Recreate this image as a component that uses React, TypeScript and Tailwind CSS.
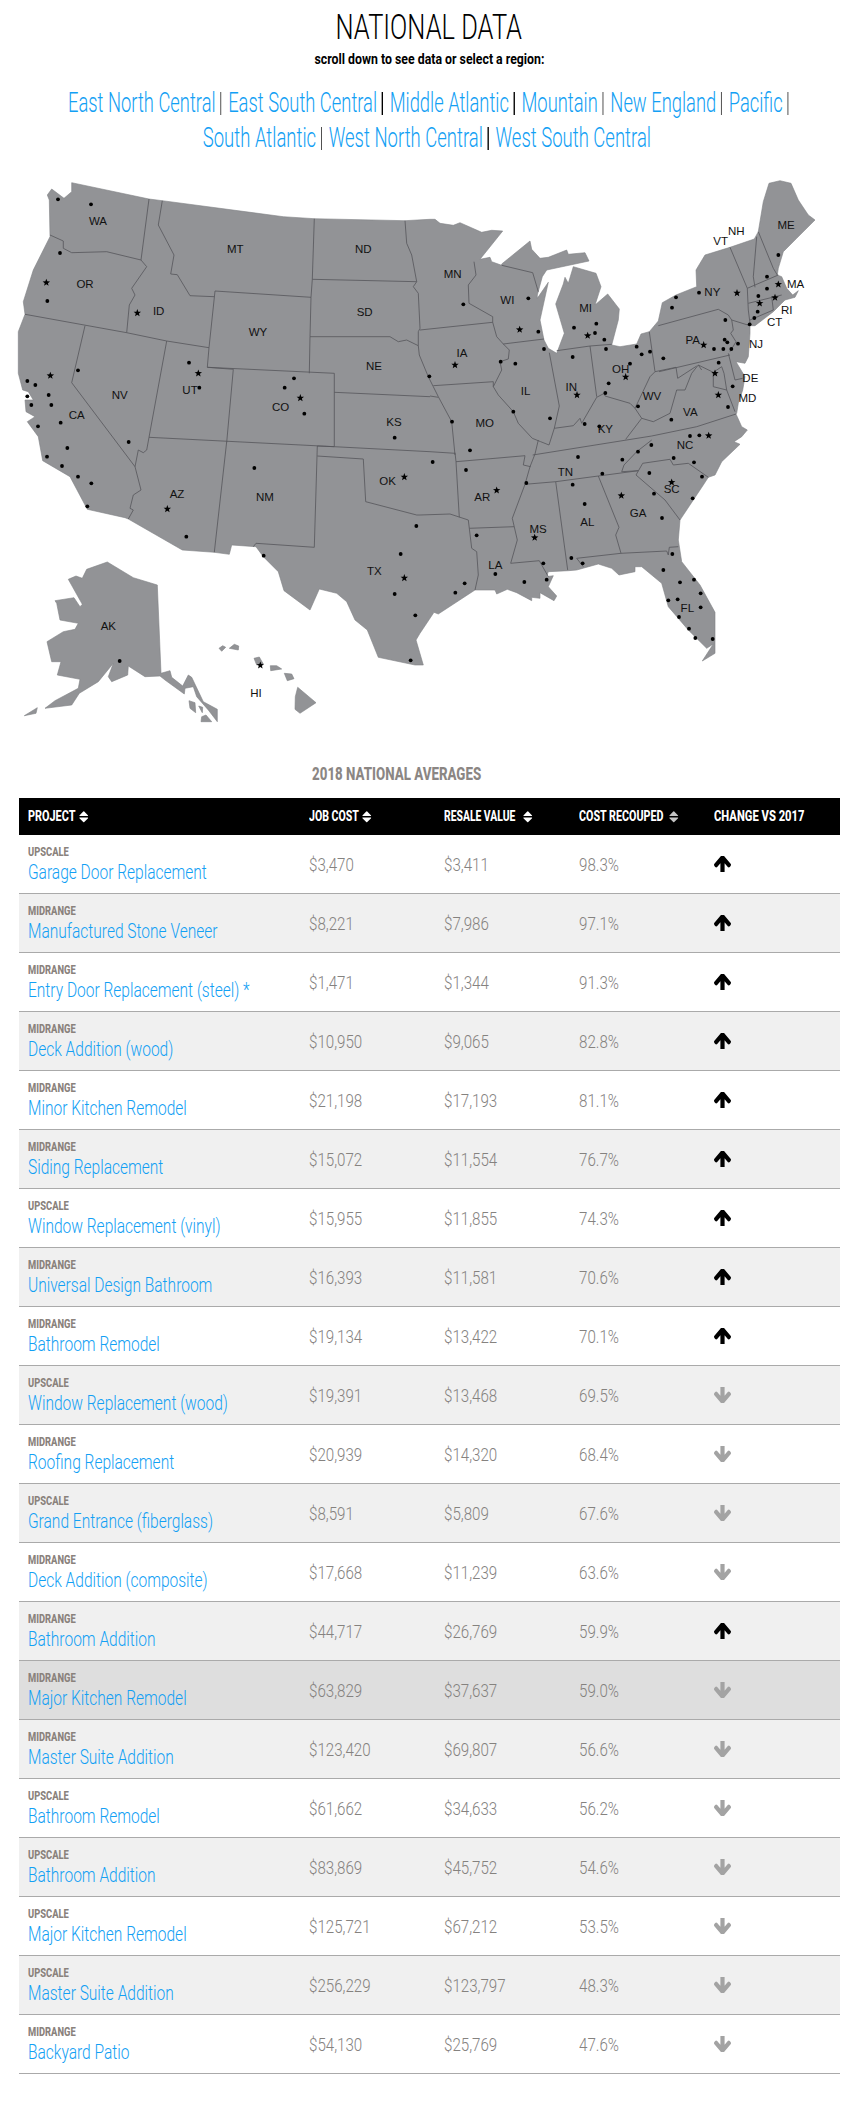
import React from "react";

const P = (ox: number, oy: number, s: string) =>
  s.trim().split(/\s+/).map((p) => {
    const [x, y] = p.split(",").map(Number);
    return `${(x / 3 + ox).toFixed(1)},${(y / 3 + oy).toFixed(1)}`;
  }).join(" ");
const A = (s: string) => P(0, 160, s);
const B = (s: string) => P(420, 160, s);
const C = (s: string) => P(0, 440, s);
const D = (s: string) => P(420, 440, s);

const outline = [
  A("215,68 447,117 487,122 850,170 943,176 1215,182 1290,178"),
  B("45,178 60,190 100,196 120,188 185,217 215,211 248,213 180,298 210,292 215,305 245,316 245,312 330,243 335,268 360,295 385,292 440,270 445,283 495,278 507,303 380,330 367,350 352,405 352,415 385,367 360,480 372,540 385,565 410,580 433,520 407,432 430,372 435,352 445,370 460,320 528,340 543,380 525,435 563,402 598,447 595,480 575,555 600,560 650,552 663,522 688,515 715,483 727,428 768,405 830,380 828,330 855,285 930,262 1003,237 1015,215 1030,125 1047,70 1080,62 1113,70 1135,120 1165,165 1185,180 1130,235 1090,275 1075,325 1072,345 1085,350 1100,385 1118,405 1135,392 1125,412 1095,420 1085,430 1060,455 1005,497 990,497 990,520 985,590 975,610 948,605 975,650 968,690 955,730 950,760 948,762 965,800 982,810 965,830 942,845 960,853"),
  D("905,65 885,105 865,112 850,135 780,240 775,300 785,365 840,435 885,517 885,640 847,663 880,612 860,625 805,570 745,500 725,430 665,380 645,380 645,395 597,405 575,385 535,372 470,390 445,392 385,395 380,410 400,407 385,440 410,468 402,482 360,458 360,475 335,472 335,482 290,458 262,448 230,462 225,450 165,450 55,522 42,517 0,580"),
  C("1248,600 1270,675 1245,675 1135,652 1102,570 1065,540 1040,485 1010,460 958,447 930,510 852,452 835,395 790,350 768,320 695,315 688,343 643,337 547,330 385,237 375,233 262,208 210,110 128,62"),
  A("115,830 82,785 105,770 78,755 75,720 100,720 85,695 68,690 55,640 55,515 75,463 70,425 100,330 150,230 148,120 142,105 155,87 192,115 215,95"),
].join(" ");

const borders = [
  A("150,225 190,243 190,265 215,278 320,275 423,300 440,320 395,385 405,405 388,435 380,518"),
  A("447,117 423,300"),
  A("487,122 475,195 522,285 512,342 532,344 570,407 643,410"),
  A("75,463 380,518 500,543 627,563"),
  A("255,497 215,668 405,920"),
  A("500,543 447,832 440,870 430,878 415,870 405,920"),
  C("405,80 423,150 400,165 390,205 400,210 385,237"),
  A("645,393 627,563 622,622 700,628 680,847"),
  A("645,393 933,412"),
  A("943,176 937,358 933,412 930,530 928,640"),
  A("622,622 1003,640 1003,860"),
  A("447,832 1003,860 1290,875"),
  B("30,875 105,880"),
  C("680,5 643,337"),
  C("952,18 943,322 768,310 760,320"),
  A("1003,697 1290,710"),
  B("30,708 55,712"),
  A("937,358 1250,365"),
  A("1215,182 1220,250 1235,285 1250,365 1240,380 1255,400 1260,505 1255,515 1255,557 1258,585 1285,650"),
  A("930,530 1170,530 1195,545 1220,540 1255,557"),
  B("0,510 218,487"),
  B("25,650 40,680 55,710 95,785 105,885"),
  C("952,18 1003,20"),
  C("952,48 1090,57 1097,185 1250,225 1260,225"),
  D("0,225 90,222 145,240 148,265 155,325 170,335 175,405 165,450"),
  D("105,38 108,65 118,232"),
  D("108,65 315,47 310,75 332,80"),
  D("148,265 282,260"),
  D("355,0 345,42 330,80 315,133 277,235 292,300 272,370 358,362 385,410"),
  D("315,133 407,125 535,108 655,92"),
  D("407,125 443,390"),
  D("535,108 597,262 587,285 603,340"),
  D("470,355 603,340 740,333 745,345 748,322 775,320"),
  D("470,355 490,380"),
  D("648,105 735,180 780,240"),
  D("648,105 668,70 750,58 760,75 805,70 865,112"),
  D("655,92 605,95 612,75 650,35 695,0"),
  B("338,885 695,828 830,800 948,762"),
  B("617,838 665,775"),
  B("40,677 220,665 220,680 235,705 280,755 295,790 337,835 362,845 387,855"),
  B("218,487 230,530 250,552 268,570 265,597 240,605 245,630 220,680"),
  B("162,305 168,345 145,375 147,430 218,470 218,487"),
  B("245,316 338,338 355,395"),
  B("250,552 372,537"),
  B("388,578 418,738 403,805 387,855"),
  B("410,572 510,558 575,553"),
  B("510,558 530,710"),
  B("403,805 460,797 480,775 485,790 530,712 553,700 555,708 630,730 645,745 665,775 700,785 750,760 770,690 795,690 815,640 835,615 845,630"),
  B("645,745 690,650 705,635 688,515"),
  B("705,635 768,622 773,655 830,618"),
  B("715,497 895,448 925,465 935,480 940,510 932,520 948,545 930,575"),
  B("717,635 930,585"),
  B("935,480 990,497"),
  B("925,580 945,660 968,655"),
  B("835,615 880,637 880,680 920,690 945,755"),
  B("880,637 905,620 912,640 920,690"),
  B("930,262 982,385 985,450 990,490"),
  B("1010,230 1000,350 1005,382"),
  B("1015,215 1060,325 1072,345"),
  B("982,385 1075,345"),
  B("985,430 1085,405"),
  B("1055,410 1060,450"),
  B("990,480 1060,450"),
];

const alaska = [
  "260,388 322,366 400,413 472,435 483,700 510,692 515,712 548,738 565,705 575,712 610,785 652,808 652,845 625,810 590,770 580,740 555,745 553,762 495,720 480,708 435,710 385,678 383,705 335,725 325,710 340,670 295,725 238,760 215,795 135,805 165,782 235,745 240,718 172,705 183,665 155,665 141,605 190,575 225,568 235,550 180,540 170,490 165,482 222,473 240,500 247,493 205,418 228,408 247,415",
  "73,827 112,803 108,820",
  "567,782 585,788 587,818 570,805",
  "596,798 608,802 607,818",
  "603,845 605,830 618,825 635,845",
  "657,625 668,617 677,622 665,634",
  "688,625 703,613 716,618 715,630",
  "762,655 778,651 790,672 770,675",
  "811,677 830,677 845,687 812,692",
  "853,700 875,702 882,716 862,722",
  "893,742 948,788 900,820 885,808 886,770",
].map(C);

type Pt = [number, number];
const off = (o: Pt, l: Pt[]): Pt[] => l.map(([x, y]) => [x / 3 + o[0], y / 3 + o[1]]);
const dots: Pt[] = [
  ...off([0, 160], [[174,118],[273,133],[180,279],[142,423],[567,608],[598,683],[234,631],[82,663],[106,675],[146,705],[82,709],[94,735],[154,735],[182,788],[114,799],[202,864],[141,890],[386,846],[882,655],[854,683],[913,761],[1184,833]]),
  ...off([420, 160], [[325,415],[130,433],[355,515],[372,567],[242,605],[286,611],[28,649],[280,755],[96,785],[390,775],[150,871],[462,503],[529,491],[525,519],[553,539],[458,591],[558,567],[650,560],[630,611],[665,583],[690,575],[730,595],[566,670],[556,699],[494,792],[538,799],[654,739],[754,779],[768,412],[756,443],[837,398],[916,480],[914,539],[922,547],[954,551],[882,567],[910,567],[934,567],[896,608],[938,679],[924,741],[810,828],[838,826],[694,855],[654,875],[474,891],[607,899],[761,894],[1075,285],[1041,350],[1041,386],[1015,408],[1013,455],[1003,474],[989,493]]),
  ...off([420, 440], [[38,66],[138,90],[822,67],[688,99],[547,101],[319,129],[458,134],[494,192],[702,161],[846,110],[818,175],[726,234],[170,286],[454,354],[488,370],[370,370],[380,419],[313,426],[226,402],[134,430],[106,458],[757,342],[730,390],[780,427],[822,419],[842,460],[842,502],[773,478],[745,481],[777,531],[807,566],[826,594],[878,597]]),
  ...off([0, 440], [[186,78],[234,110],[274,130],[262,199],[559,290],[763,84],[791,347],[1249,258],[1202,342],[1184,462],[1246,526],[1232,661],[359,663]]),
];
const stars: Pt[] = [
  ...off([0, 160], [[139,368],[412,459],[151,647],[595,640],[901,714]]),
  ...off([420, 160], [[299,509],[105,615],[503,527],[617,651],[471,705],[851,555],[885,640],[895,705],[951,399],[1075,373],[1065,413],[1019,430],[866,827]]),
  ...off([420, 440], [[230,151],[755,127],[604,167],[344,293]]),
  ...off([0, 440], [[502,207],[1213,111],[1213,414],[781,676]]),
];
const starPts = (cx: number, cy: number, r = 3.9) =>
  Array.from({ length: 10 }, (_, i) => {
    const a = -Math.PI / 2 + (i * Math.PI) / 5;
    const q = i % 2 ? r * 0.42 : r;
    return `${(cx + q * Math.cos(a)).toFixed(2)},${(cy + q * Math.sin(a)).toFixed(2)}`;
  }).join(" ");

const labels: [string, Pt][] = [
  ...([["WA",294,183],["OR",255,372],["ID",476,453],["MT",706,267],["ND",1090,267],["SD",1094,456],["WY",774,516],["NE",1122,618],["UT",570,690],["CO",842,741],["NV",359,705],["CA",230,765],["KS",1182,786]] as [string,number,number][]).map(([t,x,y]) => [t,[x/3,y/3+160]] as [string,Pt]),
  ...([["MN",98,342],["WI",262,420],["IA",126,579],["IL",317,693],["MO",194,789],["MI",497,444],["IN",454,681],["OH",602,627],["KY",556,808],["WV",696,708],["VA",811,756],["NC",795,855],["PA",818,540],["NY",877,396],["VT",902,243],["NH",949,213],["ME",1098,195],["MA",1127,372],["RI",1100,450],["CT",1064,486],["NJ",1008,552],["DE",991,654],["MD",982,714]] as [string,number,number][]).map(([t,x,y]) => [t,[x/3+420,y/3+160]] as [string,Pt]),
  ...([["AZ",531,161],["NM",795,171],["OK",1163,123],["TX",1123,393],["AK",325,558],["HI",768,759]] as [string,number,number][]).map(([t,x,y]) => [t,[x/3,y/3+440]] as [string,Pt]),
  ...([["AR",187,171],["TN",436,96],["MS",354,267],["AL",502,246],["GA",654,219],["SC",755,147],["LA",226,375],["FL",802,504]] as [string,number,number][]).map(([t,x,y]) => [t,[x/3+420,y/3+440]] as [string,Pt]),
];

function UsMap() {
  return (
    <svg viewBox="0 160 851 590" className="block w-[851px] h-[590px]">
      <polygon points={outline} fill="#929396" stroke="#808184" strokeWidth="0.6" />
      {alaska.map((p, i) => (
        <polygon key={i} points={p} fill="#929396" stroke="#808184" strokeWidth="0.6" />
      ))}
      {borders.map((p, i) => (
        <polyline key={i} points={p} fill="none" stroke="#55565a" strokeWidth="0.8" />
      ))}
      {labels.map(([t, [x, y]]) => (
        <text key={t} x={x} y={y + 4} textAnchor="middle" fontSize="11.5" fill="#111" fontFamily="'Liberation Sans', sans-serif">{t}</text>
      ))}
      {dots.map(([x, y], i) => <circle key={i} cx={x} cy={y} r="1.9" fill="#000" />)}
      {stars.map(([x, y], i) => <polygon key={i} points={starPts(x, y)} fill="#000" />)}
    </svg>
  );
}

const row1 = ["East North Central", "East South Central", "Middle Atlantic", "Mountain", "New England", "Pacific"];
const row2 = ["South Atlantic", "West North Central", "West South Central"];

function NavRow({ items, trail, className }: { items: string[]; trail?: boolean; className: string }) {
  return (
    <div className={`flex justify-center items-center h-[35px] whitespace-nowrap origin-center font-light text-[27px] leading-[35px] ${className}`}>
      {items.map((t, i) => (
        <React.Fragment key={t}>
          <a className="text-[#12a0f4] shrink-0">{t}</a>
          {(i < items.length - 1 || trail) && <span className="block shrink-0 w-[1.45px] h-[23px] bg-black ml-[7px] mr-[10px]" />}
        </React.Fragment>
      ))}
    </div>
  );
}

type R = [string, string, string, string, string, boolean];
const rows: R[] = [
  ["UPSCALE","Garage Door Replacement","$3,470","$3,411","98.3%",true],
  ["MIDRANGE","Manufactured Stone Veneer","$8,221","$7,986","97.1%",true],
  ["MIDRANGE","Entry Door Replacement (steel) *","$1,471","$1,344","91.3%",true],
  ["MIDRANGE","Deck Addition (wood)","$10,950","$9,065","82.8%",true],
  ["MIDRANGE","Minor Kitchen Remodel","$21,198","$17,193","81.1%",true],
  ["MIDRANGE","Siding Replacement","$15,072","$11,554","76.7%",true],
  ["UPSCALE","Window Replacement (vinyl)","$15,955","$11,855","74.3%",true],
  ["MIDRANGE","Universal Design Bathroom","$16,393","$11,581","70.6%",true],
  ["MIDRANGE","Bathroom Remodel","$19,134","$13,422","70.1%",true],
  ["UPSCALE","Window Replacement (wood)","$19,391","$13,468","69.5%",false],
  ["MIDRANGE","Roofing Replacement","$20,939","$14,320","68.4%",false],
  ["UPSCALE","Grand Entrance (fiberglass)","$8,591","$5,809","67.6%",false],
  ["MIDRANGE","Deck Addition (composite)","$17,668","$11,239","63.6%",false],
  ["MIDRANGE","Bathroom Addition","$44,717","$26,769","59.9%",true],
  ["MIDRANGE","Major Kitchen Remodel","$63,829","$37,637","59.0%",false],
  ["MIDRANGE","Master Suite Addition","$123,420","$69,807","56.6%",false],
  ["UPSCALE","Bathroom Remodel","$61,662","$34,633","56.2%",false],
  ["UPSCALE","Bathroom Addition","$83,869","$45,752","54.6%",false],
  ["UPSCALE","Major Kitchen Remodel","$125,721","$67,212","53.5%",false],
  ["UPSCALE","Master Suite Addition","$256,229","$123,797","48.3%",false],
  ["MIDRANGE","Backyard Patio","$54,130","$25,769","47.6%",false],
];

function SortIcon({ dim }: { dim?: boolean }) {
  return (
    <svg viewBox="0 0 9 12" className="w-[9.5px] h-[12px] shrink-0" fill={dim ? "#c4c4c4" : "#fff"}>
      <path d="M0.2 5 Q0 4.6 0.4 4.2 L4 0.5 Q4.5 0.2 5 0.5 L8.6 4.2 Q9 4.6 8.8 5 Z M0.2 6.6 L8.8 6.6 Q9 7 8.6 7.4 L5 11.1 Q4.5 11.5 4 11.1 L0.4 7.4 Q0 7 0.2 6.6 Z" />
    </svg>
  );
}

const headCols: { t: string; scale: string; icon?: string; dim?: boolean }[] = [
  { t: "PROJECT", scale: "scale-x-[.7]", icon: "-ml-[17px]" },
  { t: "JOB COST", scale: "scale-x-[.68]", icon: "-ml-[20px]" },
  { t: "RESALE VALUE", scale: "scale-x-[.667]", icon: "-ml-[28px]" },
  { t: "COST RECOUPED", scale: "scale-x-[.69]", icon: "-ml-[32px]", dim: true },
  { t: "CHANGE VS 2017", scale: "scale-x-[.723]" },
];

function Arrow({ up }: { up: boolean }) {
  return (
    <svg
      viewBox="53 280 1558 1256"
      preserveAspectRatio="none"
      className={`w-[17px] h-[16px] ${up ? "text-black" : "text-[#a3a3a3] rotate-180"}`}
      fill="currentColor"
    >
      <path d="M1611 971q0 51-37 90l-75 75q-38 38-91 38-54 0-90-38l-294-293v704q0 52-38 90t-90 38h-128q-52 0-90-38t-38-90v-704l-294 293q-36 38-90 38t-90-38l-75-75q-38-38-38-90 0-53 38-91l651-651q35-37 90-37 54 0 91 37l651 651q37 39 37 91z" />
    </svg>
  );
}

export default function App() {
  return (
    <div className="w-[851px] h-[2116px] bg-white overflow-hidden font-['Roboto',sans-serif]">
      <header className="h-[160px] pt-[8px] text-center">
        <h1 className="pl-[9px] text-[35px] leading-[40px] font-light text-black origin-center scale-x-[.727] whitespace-nowrap">NATIONAL DATA</h1>
        <p className="pl-[9px] text-[14px] leading-[20px] font-bold mt-[1px] text-black origin-center scale-x-[.88] whitespace-nowrap">scroll down to see data or select a region:</p>
        <nav className="mt-[17px]">
          <NavRow items={row1} trail className="pl-[18px] scale-x-[.68]" />
          <NavRow items={row2} className="pl-[4px] scale-x-[.685]" />
        </nav>
      </header>
      <UsMap />
      <section className="pt-[14px]">
        <h2 className="h-[34px] text-[17.5px] leading-[20px] font-extrabold text-[#8b8683] text-center pr-[76px] origin-center scale-x-[.76] whitespace-nowrap uppercase">2018 National Averages</h2>
        <div className="mx-[19px] w-[821px]">
          <div className="grid grid-cols-[281px_135px_135px_135px_135px] h-[37px] bg-black">
            {headCols.map((h) => (
              <div key={h.t} className="flex items-center pl-[9px]">
                <span className={`block text-[15.5px] font-extrabold text-white whitespace-nowrap origin-left ${h.scale}`}>{h.t}</span>
                {h.icon && <span className={`flex ${h.icon}`}><SortIcon dim={h.dim} /></span>}
              </div>
            ))}
          </div>
          {rows.map((r, i) => (
            <div
              key={i}
              className={`grid grid-cols-[281px_135px_135px_135px_135px] h-[59px] border-b border-[#aaaaaa] ${i === 14 ? "bg-[#dedede]" : i % 2 ? "bg-[#f0f0f0]" : "bg-white"}`}
            >
              <div className="pl-[9px] pt-[9px] flex flex-col">
                <span className="block text-[12px] leading-[16px] font-extrabold text-[#8a827c] origin-left scale-x-[.78] whitespace-nowrap">{r[0]}</span>
                <a className="block text-[20px] leading-[25px] text-[#12a0f4] font-light origin-left scale-x-[.776] whitespace-nowrap">{r[1]}</a>
              </div>
              {[r[2], r[3], r[4]].map((v) => (
                <div key={v} className="pl-[9px] flex items-center">
                  <span className="block text-[18px] text-[#85827f] font-light origin-left scale-x-[.84] whitespace-nowrap">{v}</span>
                </div>
              ))}
              <div className="pl-[9px] flex items-center">
                <Arrow up={r[5]} />
              </div>
            </div>
          ))}
        </div>
      </section>
    </div>
  );
}
